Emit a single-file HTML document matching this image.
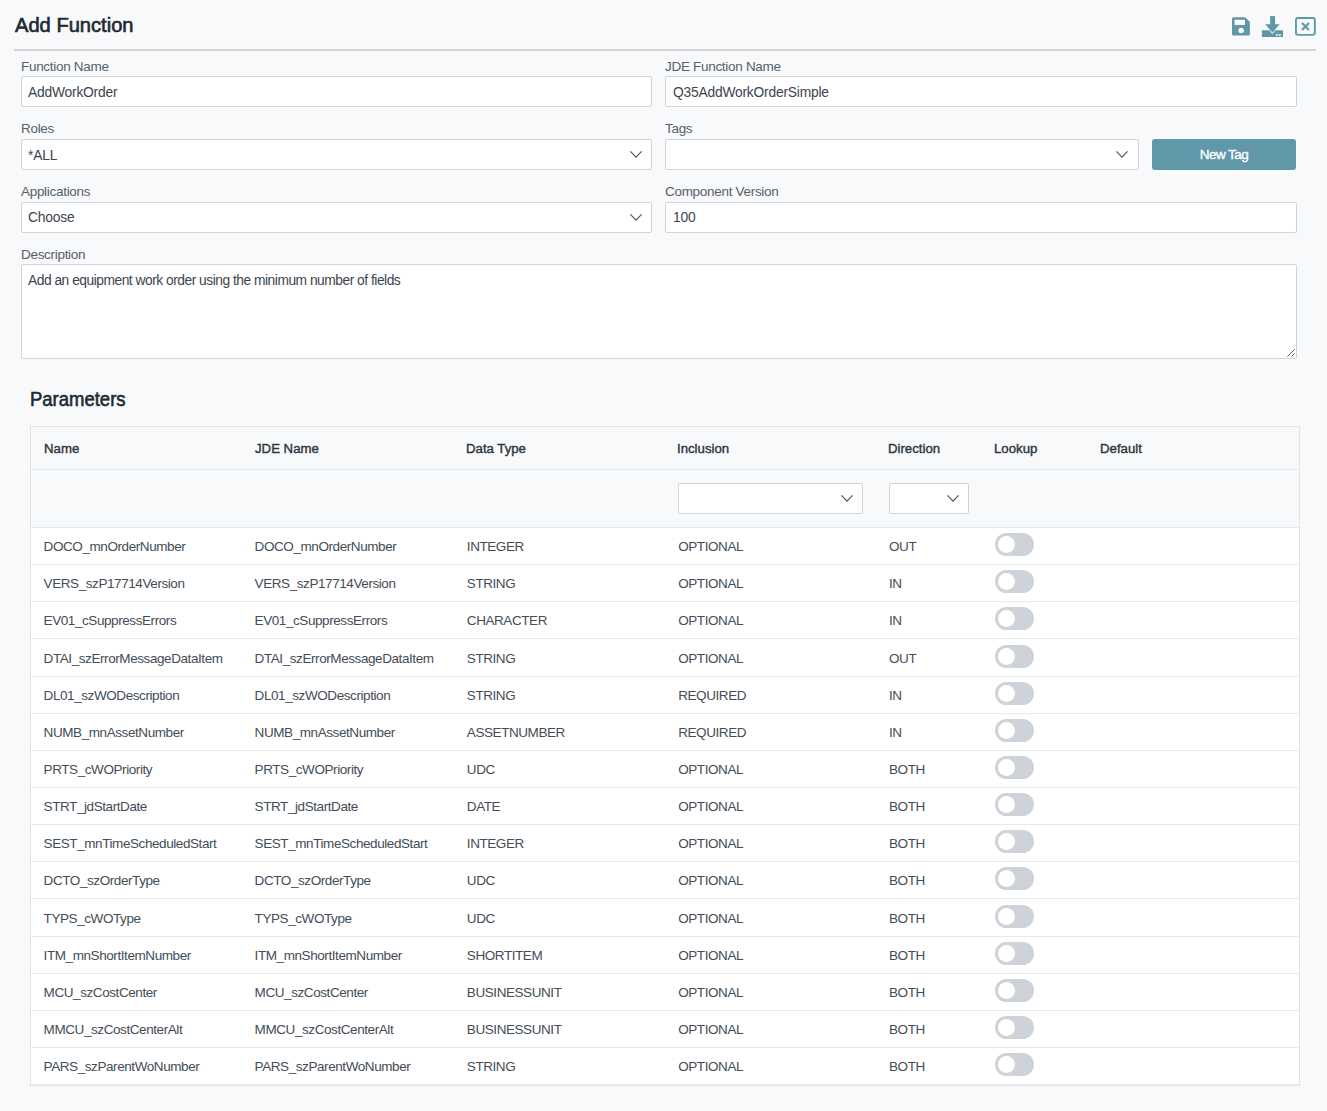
<!DOCTYPE html>
<html><head><meta charset="utf-8">
<style>
*{box-sizing:border-box;margin:0;padding:0}
html,body{width:1327px;height:1111px;overflow:hidden;background:#f8f9fa;font-family:"Liberation Sans",sans-serif;}
.a{position:absolute;white-space:nowrap}
.title{left:14.5px;top:12px;font-size:21px;font-weight:normal;-webkit-text-stroke:0.65px #212a32;color:#212a32;line-height:26px;transform:scaleX(0.958);transform-origin:0 0}
.hr{left:14px;top:49px;width:1302px;height:2px;background:#d3d3d3}
.lbl{font-size:13.5px;letter-spacing:-0.3px;color:#56606a;line-height:16px}
.inp{background:#fff;border:1px solid #ced4da;border-radius:2px;height:31px}
.txt{font-size:13.8px;letter-spacing:-0.2px;color:#3b454e;line-height:16px}
.chev{position:absolute;width:12px;height:7px}
.btn{left:1152px;top:139px;width:144px;height:31px;background:#6198a9;border-radius:3px;color:#fff;font-size:13.5px;font-weight:normal;-webkit-text-stroke:0.35px #fff;letter-spacing:-0.55px;text-align:center;line-height:31px}
.h2{left:29.6px;top:388px;font-size:19.5px;font-weight:normal;-webkit-text-stroke:0.6px #212a32;color:#212a32;line-height:22px;transform:scaleX(0.948);transform-origin:0 0}
.tbl{left:30px;top:426px;width:1270px;height:660px;border:1px solid #e4e4e4;background:#fff}
.thead{position:absolute;left:0;top:0;width:1268px;height:43px;background:#f8f9fa;border-bottom:1px solid #e6e9ec}
.tfilt{position:absolute;left:0;top:43px;width:1268px;height:58px;background:#f8f9fa;border-bottom:1px solid #e6e9ec}
.row{position:absolute;left:0;width:1268px;height:37px;border-bottom:1px solid #e7eaed}
.th{position:absolute;top:13.5px;font-size:13.7px;font-weight:normal;-webkit-text-stroke:0.4px #2c353d;color:#2c353d;letter-spacing:0px;transform:scaleX(0.965);transform-origin:0 0;line-height:16px}
.td{position:absolute;top:11px;font-size:13.5px;letter-spacing:-0.42px;color:#434d56;line-height:16px}
.tog{position:absolute;left:964px;top:5px;width:39px;height:23px;border-radius:12px;background:#ced3d9}
.tog:after{content:"";position:absolute;left:3px;top:3px;width:17px;height:17px;border-radius:50%;background:#fff}
</style></head><body>
<div class="a title">Add Function</div>
<!-- icons -->
<svg class="a" style="left:1232px;top:17px" width="19" height="19" viewBox="0 0 19 19">
 <path fill="#6198a9" d="M1.6 0.2H13.1L17.9 5V17A1.6 1.6 0 0 1 16.3 18.6H1.6A1.6 1.6 0 0 1 0 17V1.8A1.6 1.6 0 0 1 1.6 0.2z"/>
 <rect x="2.6" y="2.8" width="10.4" height="5.1" fill="#fff"/>
 <circle cx="9.1" cy="13.4" r="2.7" fill="#fff"/>
</svg>
<svg class="a" style="left:1261px;top:15px" width="23" height="23" viewBox="0 0 23 23">
 <rect x="9.1" y="1.1" width="5" height="9" fill="#6198a9"/>
 <path fill="#6198a9" d="M4.3 9.2H18.6L11.45 17.8z"/>
 <path fill="#6198a9" d="M0.9 15.3H8.4L11.45 19L14.5 15.3H22V21.9H0.9z"/>
 <rect x="15" y="19.2" width="1.8" height="1.6" fill="#fff"/><rect x="17.9" y="19.2" width="1.8" height="1.6" fill="#fff"/>
</svg>
<svg class="a" style="left:1294px;top:16px" width="23" height="21" viewBox="0 0 23 21">
 <rect x="1.95" y="2.05" width="18.9" height="16.8" rx="2" fill="none" stroke="#6198a9" stroke-width="1.9"/>
 <path d="M8 7L15 14M15 7L8 14" stroke="#6198a9" stroke-width="2.2"/>
</svg>
<div class="a hr"></div>

<div class="a lbl" style="left:21px;top:59px">Function Name</div>
<div class="a inp" style="left:21px;top:76px;width:631px"></div>
<div class="a txt" style="left:28px;top:85px">AddWorkOrder</div>
<div class="a lbl" style="left:665px;top:59px">JDE Function Name</div>
<div class="a inp" style="left:665px;top:76px;width:632px"></div>
<div class="a txt" style="left:673px;top:85px">Q35AddWorkOrderSimple</div>

<div class="a lbl" style="left:21px;top:121px">Roles</div>
<div class="a inp" style="left:21px;top:139px;width:631px"></div>
<div class="a txt" style="left:28px;top:148px">*ALL</div>
<svg class="chev" style="left:630px;top:151px" viewBox="0 0 12 7"><path d="M0.4 0.4L6 6.1 11.6 0.4" fill="none" stroke="#475569" stroke-width="1.15"/></svg>
<div class="a lbl" style="left:665px;top:121px">Tags</div>
<div class="a inp" style="left:665px;top:139px;width:474px"></div>
<svg class="chev" style="left:1116px;top:151px" viewBox="0 0 12 7"><path d="M0.4 0.4L6 6.1 11.6 0.4" fill="none" stroke="#475569" stroke-width="1.15"/></svg>
<div class="a btn">New Tag</div>

<div class="a lbl" style="left:21px;top:184px">Applications</div>
<div class="a inp" style="left:21px;top:202px;width:631px"></div>
<div class="a txt" style="left:28px;top:210px">Choose</div>
<svg class="chev" style="left:630px;top:214px" viewBox="0 0 12 7"><path d="M0.4 0.4L6 6.1 11.6 0.4" fill="none" stroke="#475569" stroke-width="1.15"/></svg>
<div class="a lbl" style="left:665px;top:184px">Component Version</div>
<div class="a inp" style="left:665px;top:202px;width:632px"></div>
<div class="a txt" style="left:673px;top:210px">100</div>

<div class="a lbl" style="left:21px;top:247px">Description</div>
<div class="a inp" style="left:21px;top:264px;width:1276px;height:95px"></div>
<div class="a txt" style="left:28px;top:273px;letter-spacing:-0.49px">Add an equipment work order using the minimum number of fields</div>
<svg class="a" style="left:1285px;top:347px" width="10" height="10" viewBox="0 0 10 10"><path d="M9.6 2.4L2.4 9.6M9.6 6.4L6.4 9.6" stroke="#555" stroke-width="1"/></svg>

<div class="a h2">Parameters</div>

<div class="a tbl" id="tbl">
 <div class="thead">
  <div class="th" style="left:13px">Name</div>
  <div class="th" style="left:224px">JDE Name</div>
  <div class="th" style="left:435px">Data Type</div>
  <div class="th" style="left:646px">Inclusion</div>
  <div class="th" style="left:857px">Direction</div>
  <div class="th" style="left:963px">Lookup</div>
  <div class="th" style="left:1069px">Default</div>
 </div>
 <div class="tfilt">
  <div class="inp" style="position:absolute;left:647px;top:13px;width:185px;height:31px"></div>
  <svg class="chev" style="left:810px;top:25px" viewBox="0 0 12 7"><path d="M0.4 0.4L6 6.1 11.6 0.4" fill="none" stroke="#475569" stroke-width="1.15"/></svg>
  <div class="inp" style="position:absolute;left:858px;top:13px;width:80px;height:31px"></div>
  <svg class="chev" style="left:916px;top:25px" viewBox="0 0 12 7"><path d="M0.4 0.4L6 6.1 11.6 0.4" fill="none" stroke="#475569" stroke-width="1.15"/></svg>
 </div>
 <div class="row" style="top:101.20px"><div class="td" style="left:12.6px">DOCO_mnOrderNumber</div><div class="td" style="left:223.6px">DOCO_mnOrderNumber</div><div class="td" style="left:435.8px">INTEGER</div><div class="td" style="left:647.2px">OPTIONAL</div><div class="td" style="left:858px">OUT</div><div class="tog"></div></div>
 <div class="row" style="top:138.33px"><div class="td" style="left:12.6px">VERS_szP17714Version</div><div class="td" style="left:223.6px">VERS_szP17714Version</div><div class="td" style="left:435.8px">STRING</div><div class="td" style="left:647.2px">OPTIONAL</div><div class="td" style="left:858px">IN</div><div class="tog"></div></div>
 <div class="row" style="top:175.46px"><div class="td" style="left:12.6px">EV01_cSuppressErrors</div><div class="td" style="left:223.6px">EV01_cSuppressErrors</div><div class="td" style="left:435.8px">CHARACTER</div><div class="td" style="left:647.2px">OPTIONAL</div><div class="td" style="left:858px">IN</div><div class="tog"></div></div>
 <div class="row" style="top:212.59px"><div class="td" style="left:12.6px">DTAI_szErrorMessageDataItem</div><div class="td" style="left:223.6px">DTAI_szErrorMessageDataItem</div><div class="td" style="left:435.8px">STRING</div><div class="td" style="left:647.2px">OPTIONAL</div><div class="td" style="left:858px">OUT</div><div class="tog"></div></div>
 <div class="row" style="top:249.72px"><div class="td" style="left:12.6px">DL01_szWODescription</div><div class="td" style="left:223.6px">DL01_szWODescription</div><div class="td" style="left:435.8px">STRING</div><div class="td" style="left:647.2px">REQUIRED</div><div class="td" style="left:858px">IN</div><div class="tog"></div></div>
 <div class="row" style="top:286.85px"><div class="td" style="left:12.6px">NUMB_mnAssetNumber</div><div class="td" style="left:223.6px">NUMB_mnAssetNumber</div><div class="td" style="left:435.8px">ASSETNUMBER</div><div class="td" style="left:647.2px">REQUIRED</div><div class="td" style="left:858px">IN</div><div class="tog"></div></div>
 <div class="row" style="top:323.98px"><div class="td" style="left:12.6px">PRTS_cWOPriority</div><div class="td" style="left:223.6px">PRTS_cWOPriority</div><div class="td" style="left:435.8px">UDC</div><div class="td" style="left:647.2px">OPTIONAL</div><div class="td" style="left:858px">BOTH</div><div class="tog"></div></div>
 <div class="row" style="top:361.11px"><div class="td" style="left:12.6px">STRT_jdStartDate</div><div class="td" style="left:223.6px">STRT_jdStartDate</div><div class="td" style="left:435.8px">DATE</div><div class="td" style="left:647.2px">OPTIONAL</div><div class="td" style="left:858px">BOTH</div><div class="tog"></div></div>
 <div class="row" style="top:398.24px"><div class="td" style="left:12.6px">SEST_mnTimeScheduledStart</div><div class="td" style="left:223.6px">SEST_mnTimeScheduledStart</div><div class="td" style="left:435.8px">INTEGER</div><div class="td" style="left:647.2px">OPTIONAL</div><div class="td" style="left:858px">BOTH</div><div class="tog"></div></div>
 <div class="row" style="top:435.37px"><div class="td" style="left:12.6px">DCTO_szOrderType</div><div class="td" style="left:223.6px">DCTO_szOrderType</div><div class="td" style="left:435.8px">UDC</div><div class="td" style="left:647.2px">OPTIONAL</div><div class="td" style="left:858px">BOTH</div><div class="tog"></div></div>
 <div class="row" style="top:472.50px"><div class="td" style="left:12.6px">TYPS_cWOType</div><div class="td" style="left:223.6px">TYPS_cWOType</div><div class="td" style="left:435.8px">UDC</div><div class="td" style="left:647.2px">OPTIONAL</div><div class="td" style="left:858px">BOTH</div><div class="tog"></div></div>
 <div class="row" style="top:509.63px"><div class="td" style="left:12.6px">ITM_mnShortItemNumber</div><div class="td" style="left:223.6px">ITM_mnShortItemNumber</div><div class="td" style="left:435.8px">SHORTITEM</div><div class="td" style="left:647.2px">OPTIONAL</div><div class="td" style="left:858px">BOTH</div><div class="tog"></div></div>
 <div class="row" style="top:546.76px"><div class="td" style="left:12.6px">MCU_szCostCenter</div><div class="td" style="left:223.6px">MCU_szCostCenter</div><div class="td" style="left:435.8px">BUSINESSUNIT</div><div class="td" style="left:647.2px">OPTIONAL</div><div class="td" style="left:858px">BOTH</div><div class="tog"></div></div>
 <div class="row" style="top:583.89px"><div class="td" style="left:12.6px">MMCU_szCostCenterAlt</div><div class="td" style="left:223.6px">MMCU_szCostCenterAlt</div><div class="td" style="left:435.8px">BUSINESSUNIT</div><div class="td" style="left:647.2px">OPTIONAL</div><div class="td" style="left:858px">BOTH</div><div class="tog"></div></div>
 <div class="row" style="top:621.02px"><div class="td" style="left:12.6px">PARS_szParentWoNumber</div><div class="td" style="left:223.6px">PARS_szParentWoNumber</div><div class="td" style="left:435.8px">STRING</div><div class="td" style="left:647.2px">OPTIONAL</div><div class="td" style="left:858px">BOTH</div><div class="tog"></div></div>
</div>
</body></html>
